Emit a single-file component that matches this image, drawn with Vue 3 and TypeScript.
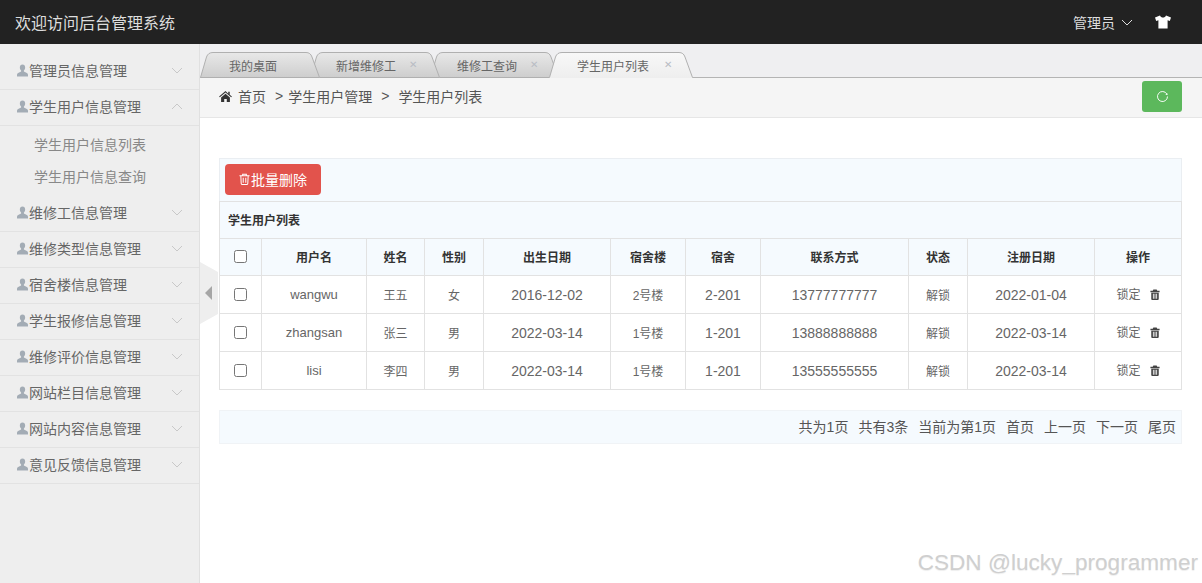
<script setup lang="ts">
interface MenuItem {
  title: string;
  open?: boolean;
  children?: string[];
}

interface Tab {
  title: string;
  width: number;
  inset: number;
  active?: boolean;
  closable?: boolean;
}

interface UserRow {
  username: string;
  name: string;
  gender: string;
  birthday: string;
  building: string;
  room: string;
  phone: string;
  registered: string;
}

const menus: MenuItem[] = [
  { title: '管理员信息管理' },
  { title: '学生用户信息管理', open: true, children: ['学生用户信息列表', '学生用户信息查询'] },
  { title: '维修工信息管理' },
  { title: '维修类型信息管理' },
  { title: '宿舍楼信息管理' },
  { title: '学生报修信息管理' },
  { title: '维修评价信息管理' },
  { title: '网站栏目信息管理' },
  { title: '网站内容信息管理' },
  { title: '意见反馈信息管理' },
];

const tabs: Tab[] = [
  { title: '我的桌面', width: 120, inset: 29 },
  { title: '新增维修工', width: 130, inset: 26, closable: true },
  { title: '维修工查询', width: 129, inset: 27, closable: true },
  { title: '学生用户列表', width: 144, inset: 28, active: true, closable: true },
];

const rows: UserRow[] = [
  { username: 'wangwu', name: '王五', gender: '女', birthday: '2016-12-02', building: '2号楼', room: '2-201', phone: '13777777777', registered: '2022-01-04' },
  { username: 'zhangsan', name: '张三', gender: '男', birthday: '2022-03-14', building: '1号楼', room: '1-201', phone: '13888888888', registered: '2022-03-14' },
  { username: 'lisi', name: '李四', gender: '男', birthday: '2022-03-14', building: '1号楼', room: '1-201', phone: '13555555555', registered: '2022-03-14' },
];

const columns = ['用户名', '姓名', '性别', '出生日期', '宿舍楼', '宿舍', '联系方式', '状态', '注册日期', '操作'];
const colWidths = [42, 105, 58, 59, 127, 75, 75, 148, 59, 127, 87];
const pager = ['共为1页', '共有3条', '当前为第1页', '首页', '上一页', '下一页', '尾页'];

// outline of a tab: slanted sides, small rounded shoulders, open at the bottom
function tabPath(w: number): string {
  return `M0.5 25.5 L6.5 5 Q8 0.5 13 0.5 L${w - 14} 0.5 Q${w - 9.5} 0.5 ${w - 8} 5 L${w - 0.5} 25.5`;
}

function tabStyle(tab: Tab, index: number) {
  return { width: tab.width + 'px', zIndex: tab.active ? tabs.length : tabs.length - index - 1 };
}
</script>

<template>
  <div class="page">
    <header class="topbar">
      <span class="topbar__title">欢迎访问后台管理系统</span>
      <div class="topbar__right">
        <span>管理员</span>
        <svg class="topbar__caret" viewBox="0 0 12 7" width="12" height="7">
          <path d="M1 1l5 5 5-5" fill="none" stroke="#ddd" stroke-width="1" />
        </svg>
        <svg class="topbar__shirt" viewBox="0 0 16 14" width="16" height="14">
          <path d="M5 .5 0 2.600l1.200 3.300 2.200-.6v8.200h9.200V5.300l2.200.6L16 2.600 11 .5C10.400 2 9.300 2.600 8 2.600S5.600 2 5 .5z" fill="#fff" />
        </svg>
      </div>
    </header>

    <div class="body">
      <aside class="sidebar">
        <div v-for="menu in menus" :key="menu.title" class="menu">
          <div class="menu__head">
            <svg class="menu__user" viewBox="0 0 12 13" width="11" height="13">
              <path d="M6 0C4.200 0 3.100 1.300 3.100 3.200c0 1.400.6 2.700 1.400 3.400v1L1.200 9.200C.4 9.600 0 10.200 0 11v2h12v-2c0-.8-.4-1.400-1.200-1.800L7.500 7.600v-1c.8-.7 1.400-2 1.400-3.400C8.900 1.300 7.800 0 6 0z" fill="#a3acb5" />
            </svg>
            <span>{{ menu.title }}</span>
            <svg class="menu__arrow" viewBox="0 0 12 7" width="12" height="7">
              <path :d="menu.open ? 'M1 6l5-5 5 5' : 'M1 1l5 5 5-5'" fill="none" stroke="#c8c8c8" stroke-width="1" />
            </svg>
          </div>
          <ul v-if="menu.children" class="menu__sub">
            <li v-for="child in menu.children" :key="child">{{ child }}</li>
          </ul>
        </div>
      </aside>

      <main class="main">
        <nav class="tabs">
          <div
            v-for="(tab, i) in tabs"
            :key="tab.title"
            class="tab"
            :class="{ 'is-active': tab.active }"
            :style="tabStyle(tab, i)"
          >
            <svg class="tab__shape" :width="tab.width" height="26" :viewBox="`0 0 ${tab.width} 26`">
              <defs>
                <linearGradient :id="`tab-fill-${tab.width}`" x1="0" y1="0" x2="0" y2="1">
                  <stop offset="0" :stop-color="tab.active ? '#f8f8f8' : '#e8e8e8'" />
                  <stop offset="1" :stop-color="tab.active ? '#eeeeee' : '#cdcdcd'" />
                </linearGradient>
              </defs>
              <path :d="tabPath(tab.width) + ' V26 H0.5 Z'" :fill="`url(#tab-fill-${tab.width})`" stroke="none" />
              <path :d="tabPath(tab.width) + (tab.active ? '' : ' Z')" fill="none" stroke="#b0b0b0" stroke-width="1" />
            </svg>
            <span class="tab__label" :style="{ marginLeft: tab.inset + 'px' }">{{ tab.title }}</span>
            <span v-if="tab.closable" class="tab__close">✕</span>
          </div>
        </nav>

        <div class="crumbs">
          <svg viewBox="0 0 14 12" width="13" height="11">
            <path d="M7 0 0 6l.8.9L7 1.700l6.200 5.200.8-.9-2.400-2V.8H10v2.100L7 0zM2.200 7.200V12h3.400V8.600h2.800V12h3.400V7.200L7 3.100 2.200 7.200z" fill="#333" />
          </svg>
          <span class="crumbs__item">首页</span>
          <span class="crumbs__sep crumbs__sep--first">&gt;</span>
          <span>学生用户管理</span>
          <span class="crumbs__sep">&gt;</span>
          <span>学生用户列表</span>
          <button class="crumbs__refresh" type="button">
            <svg viewBox="0 0 14 14" width="13" height="13">
              <path d="M11.600 4.200A5.400 5.400 0 1 0 12.400 7" fill="none" stroke="#fff" stroke-width="1" />
              <path d="M12.600 5.400 10 5.200l2-2z" fill="#fff" />
            </svg>
          </button>
        </div>

        <div class="content">
          <div class="toolbar">
            <button class="btn-danger" type="button">
              <svg viewBox="0 0 12 13" width="11" height="12">
                <path d="M.5 3h11M4 3V1.200h4V3M2 3l.4 8.500c0 .6.500 1 1 1h5.200c.5 0 1-.4 1-1L10 3M4.600 5v5.500M7.400 5v5.500" fill="none" stroke="#fff" stroke-width="1.100" />
              </svg>
              <span>批量删除</span>
            </button>
          </div>

          <table class="grid">
            <colgroup>
              <col v-for="(w, i) in colWidths" :key="i" :style="{ width: w + 'px' }" />
            </colgroup>
            <thead>
              <tr class="grid__title">
                <th :colspan="colWidths.length">学生用户列表</th>
              </tr>
              <tr class="grid__head">
                <th><input type="checkbox" /></th>
                <th v-for="col in columns" :key="col">{{ col }}</th>
              </tr>
            </thead>
            <tbody>
              <tr v-for="row in rows" :key="row.username">
                <td><input type="checkbox" /></td>
                <td class="latin latin--name">{{ row.username }}</td>
                <td>{{ row.name }}</td>
                <td>{{ row.gender }}</td>
                <td class="latin">{{ row.birthday }}</td>
                <td>{{ row.building }}</td>
                <td class="latin">{{ row.room }}</td>
                <td class="latin">{{ row.phone }}</td>
                <td>解锁</td>
                <td class="latin">{{ row.registered }}</td>
                <td class="ops">
                  <span>锁定</span>
                  <svg viewBox="0 0 12 13" width="10" height="11">
                    <path d="M4 .5h4l.7 1.500H11.500v1.700H.5V2h2.800zM1.500 4.500h9v7c0 .8-.6 1.500-1.400 1.500H2.900c-.8 0-1.400-.7-1.400-1.500zm2 1v6h1v-6zm2 0v6h1v-6zm2 0v6h1v-6z" fill="#444" />
                  </svg>
                </td>
              </tr>
            </tbody>
          </table>

          <div class="pager">
            <span v-for="item in pager" :key="item">{{ item }}</span>
          </div>
        </div>

        <div class="collapse">
          <span class="collapse__arrow"></span>
        </div>
      </main>
    </div>

    <div class="watermark">CSDN @lucky_programmer</div>
  </div>
</template>

<style>
html,
body {
  margin: 0;
  background: #fff;
}
</style>

<style scoped>
.page {
  position: relative;
  display: flex;
  flex-direction: column;
  height: 583px;
  overflow: hidden;
  color: #333;
  font-family: "Liberation Sans", "Noto Sans CJK SC", sans-serif;
  font-size: 14px;
}

.topbar {
  display: flex;
  flex: none;
  align-items: center;
  justify-content: space-between;
  height: 44px;
  padding: 0 31px 0 15px;
  box-sizing: border-box;
  background: #222;
  color: #ddd;
}

.topbar__title {
  font-size: 16px;
}

.topbar__right {
  display: flex;
  align-items: center;
  font-size: 14px;
}

.topbar__caret {
  margin-left: 6px;
}

.topbar__shirt {
  margin-left: 22px;
}

.body {
  display: flex;
  flex: 1;
  min-height: 0;
}

.sidebar {
  flex: none;
  width: 200px;
  padding-top: 10px;
  box-sizing: border-box;
  background: #eeeeee;
  border-right: 1px solid #e0e0e0;
}

.menu__head {
  display: flex;
  align-items: center;
  height: 36px;
  padding: 0 17px 3px;
  box-sizing: border-box;
  border-bottom: 1px solid #e2e2e2;
  color: #666;
}

.menu__user {
  flex: none;
  margin-right: 1px;
  margin-top: 1px;
}

.menu__arrow {
  margin-left: auto;
  margin-right: -1px;
}

.menu__sub {
  height: 70px;
  margin: 0;
  padding: 3px 0 0 34px;
  box-sizing: border-box;
  list-style: none;
  color: #888;
  line-height: 32px;
}

.main {
  position: relative;
  display: flex;
  flex: 1;
  flex-direction: column;
  min-width: 0;
}

.tabs {
  display: flex;
  flex: none;
  align-items: flex-end;
  height: 34px;
  box-sizing: border-box;
  background: #efeff1;
  border-bottom: 1px solid #b4b4b4;
}

.tab {
  position: relative;
  display: flex;
  flex: none;
  align-items: center;
  height: 25px;
  margin-right: -10px;
  color: #666;
  font-size: 12px;
}

.tab__shape {
  position: absolute;
  left: 0;
  top: 0;
}

.tab__label {
  position: relative;
  margin-top: 1px;
}

.tab__close {
  position: relative;
  margin-left: 13px;
  color: #b8bcc4;
  font-size: 10px;
}

.tab.is-active .tab__close {
  margin-left: 15px;
}

.crumbs {
  display: flex;
  flex: none;
  align-items: center;
  height: 40px;
  padding: 0 20px 0 19px;
  box-sizing: border-box;
  background: #f5f5f5;
  border-bottom: 1px solid #e6e6e6;
  color: #555;
}

.crumbs > span,
.crumbs > svg {
  margin-bottom: 3px;
}

.crumbs__item {
  margin-left: 6px;
}

.crumbs__sep {
  margin: 0 9px 0 9px;
}

.crumbs__sep--first {
  margin: 0 5px 0 9px;
}

.crumbs__refresh {
  display: flex;
  align-items: center;
  justify-content: center;
  width: 40px;
  height: 31px;
  margin-left: auto;
  margin-top: -2px;
  padding: 0;
  background: #5cb85c;
  border: none;
  border-radius: 3px;
}

.content {
  flex: 1;
  padding: 40px 20px 0 19px;
  background: #fff;
}

.toolbar {
  display: flex;
  align-items: center;
  height: 43px;
  padding: 0 0 2px 5px;
  box-sizing: border-box;
  background: #f5fafe;
  border: 1px solid #eaeef2;
  border-bottom: none;
}

.btn-danger {
  display: flex;
  align-items: center;
  justify-content: center;
  width: 96px;
  height: 31px;
  padding: 0;
  background: #e2534c;
  border: none;
  border-radius: 4px;
  color: #fff;
  font: inherit;
}

.btn-danger svg {
  margin-right: 1px;
}

.grid {
  width: 962px;
  border-collapse: collapse;
  table-layout: fixed;
  background: #fff;
  color: #333;
  font-size: 12px;
  text-align: center;
}

.grid th,
.grid td {
  padding: 0;
  border: 1px solid #e2e2e2;
}

.grid input {
  display: block;
  margin: 0 auto;
}

.grid__title th {
  height: 37px;
  padding: 0 0 1px 8px;
  box-sizing: border-box;
  background: #f5fafe;
  text-align: left;
}

.grid__head th {
  height: 37px;
  padding-bottom: 1px;
  box-sizing: border-box;
  background: #f5fafe;
}

.grid tbody td {
  height: 37px;
  color: #666;
}

.grid .latin {
  font-size: 14px;
}

.grid .latin--name {
  font-size: 13px;
}

.ops span {
  position: relative;
  top: -1px;
}

.ops svg {
  margin-left: 9px;
  vertical-align: 0;
}

.pager {
  display: flex;
  align-items: center;
  justify-content: flex-end;
  gap: 10px;
  height: 34px;
  margin-top: 20px;
  padding: 0 5px 2px 0;
  box-sizing: border-box;
  background: #f5fafe;
  border: 1px solid #f0f3f6;
  color: #555;
}

.collapse {
  position: absolute;
  left: 0;
  top: 218px;
  display: flex;
  align-items: center;
  width: 18px;
  height: 62px;
  background: #eeeeee;
  clip-path: polygon(0 0, 100% 10px, 100% 52px, 0 100%);
}

.collapse__arrow {
  width: 0;
  height: 0;
  margin-left: 5px;
  border-top: 7px solid transparent;
  border-bottom: 7px solid transparent;
  border-right: 7px solid #a6a6a6;
}

.watermark {
  position: absolute;
  right: 4px;
  bottom: 7px;
  color: #cfcfcf;
  font-family: "Liberation Sans", sans-serif;
  font-size: 22.6px;
  text-shadow: 0 1px 1px #eee;
  white-space: nowrap;
}
</style>
